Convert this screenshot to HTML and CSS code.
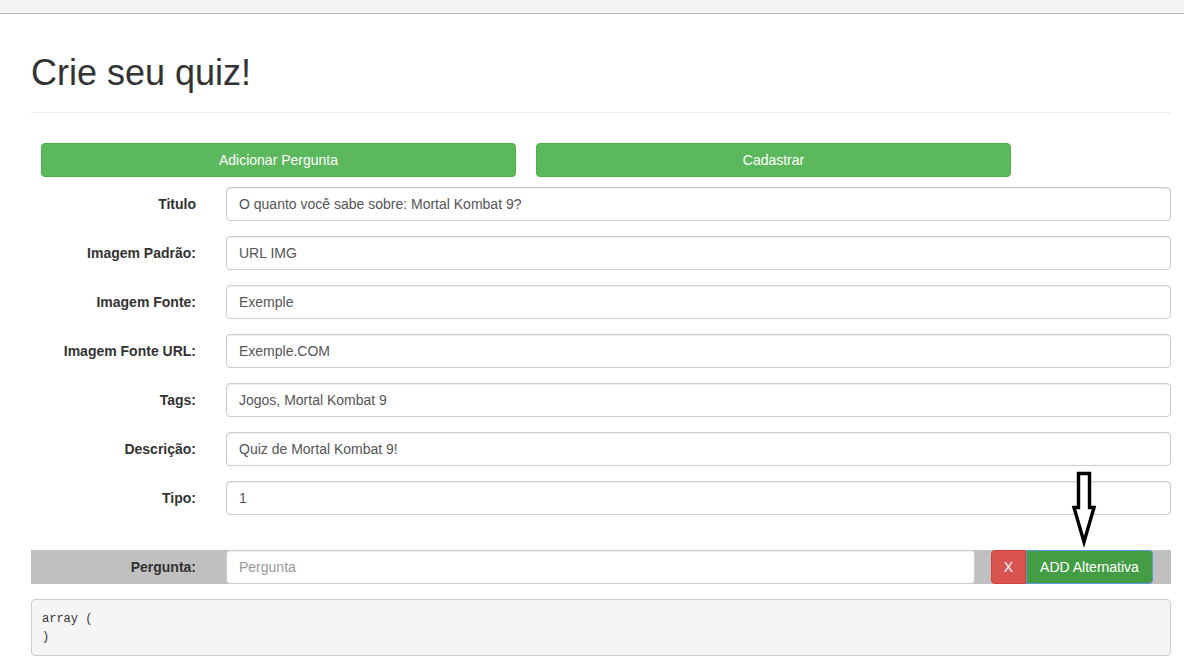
FILE: index.html
```html
<!DOCTYPE html>
<html lang="pt">
<head>
<meta charset="utf-8">
<title>Crie seu quiz!</title>
<link rel="stylesheet" href="styles.css">
</head>
<body>
<div class="topbar"></div>
<div class="container">
  <div class="page-header"><h1>Crie seu quiz!</h1></div>
  <div class="actions">
    <button class="btn btn-success wide">Adicionar Pergunta</button>
    <button class="btn btn-success wide">Cadastrar</button>
  </div>
  <form class="form">
    <div class="row"><label>Titulo</label><input class="input" value="O quanto você sabe sobre: Mortal Kombat 9?"></div>
    <div class="row"><label>Imagem Padrão:</label><input class="input" value="URL IMG"></div>
    <div class="row"><label>Imagem Fonte:</label><input class="input" value="Exemple"></div>
    <div class="row"><label>Imagem Fonte URL:</label><input class="input" value="Exemple.COM"></div>
    <div class="row"><label>Tags:</label><input class="input" value="Jogos, Mortal Kombat 9"></div>
    <div class="row"><label>Descrição:</label><input class="input" value="Quiz de Mortal Kombat 9!"></div>
    <div class="row"><label>Tipo:</label><input class="input" value="1"></div>
    <div class="question">
      <label>Pergunta:</label>
      <input class="input q-input" placeholder="Pergunta">
      <div class="btn-group">
        <button type="button" class="btn btn-danger x">X</button>
        <button type="button" class="btn btn-add">ADD Alternativa</button>
      </div>
    </div>
  </form>
  <pre class="dump">array (
)</pre>
</div>
<svg class="arrow" width="30" height="80" viewBox="1070 468 30 80" aria-hidden="true">
  <path d="M1078.5 473.5 H1089.5 V507.5 H1094 L1084 542 L1074 507.5 H1078.5 Z" fill="#fff" stroke="#000" stroke-width="3.4" stroke-linejoin="miter"/>
</svg>
</body>
</html>
```
FILE: styles.css
```css
* { box-sizing: border-box; }
html, body { margin: 0; padding: 0; background: #fff; }
body {
  font-family: "Liberation Sans", Arial, sans-serif;
  font-size: 14px;
  color: #333;
  position: relative;
}
.topbar {
  height: 14px;
  background: #f1f3f4;
  border-bottom: 1px solid #b4b4b4;
}
.container {
  padding: 0 13px 0 31px;
}
.page-header {
  margin-top: 39px;
  padding-bottom: 19px;
  border-bottom: 1px solid #eee;
}
.page-header h1 {
  margin: 0;
  font-size: 36px;
  font-weight: 500;
  line-height: 40px;
  color: #333;
}
.actions {
  display: flex;
  gap: 20px;
  margin: 30px 0 10px 10px;
}
.btn {
  font-family: "Liberation Sans", Arial, sans-serif;
  font-size: 14px;
  height: 34px;
  padding: 6px 12px;
  border: 1px solid transparent;
  border-radius: 4px;
  color: #fff;
  line-height: 20px;
  cursor: pointer;
}
.btn-success { background: #5cb85c; border-color: #4cae4c; }
.wide { width: 475px; }
.form { margin: 0; }
.row {
  display: grid;
  grid-template-columns: 165px 1fr;
  column-gap: 30px;
  align-items: center;
  margin-bottom: 15px;
}
.row label, .question label {
  text-align: right;
  font-weight: 700;
  color: #333;
}
.input {
  height: 34px;
  width: 100%;
  padding: 6px 12px;
  font-family: "Liberation Sans", Arial, sans-serif;
  font-size: 14px;
  color: #555;
  background: #fff;
  border: 1px solid #ccc;
  border-radius: 4px;
  box-shadow: inset 0 1px 1px rgba(0,0,0,.075);
}
.input::placeholder { color: #999; }
.question {
  display: flex;
  align-items: center;
  height: 34px;
  margin-top: 35px;
  background: #c0c0c0;
}
.question label { width: 165px; flex: none; margin-right: 30px; }
.q-input { width: 749px; flex: none; }
.btn-group { display: flex; margin-left: 16px; }
.btn-danger {
  background: #d9534f;
  border-color: #d43f3a;
  border-radius: 4px 0 0 4px;
}
.x { width: 35px; padding: 6px 0; }
.btn-add {
  width: 127px;
  background: #449d44;
  border-color: #5b9bd8;
  border-radius: 0 4px 4px 0;
  padding: 6px 0;
  margin-left: 0;
}
.dump {
  margin: 15px 0 0 0;
  padding: 10px 10px 9px;
  font-family: "Liberation Mono", "Courier New", monospace;
  font-size: 12px;
  line-height: 18px;
  color: #333;
  background: #f5f5f5;
  border: 1px solid #ccc;
  border-radius: 4px;
}
.arrow {
  position: absolute;
  left: 1070px;
  top: 468px;
}
```
